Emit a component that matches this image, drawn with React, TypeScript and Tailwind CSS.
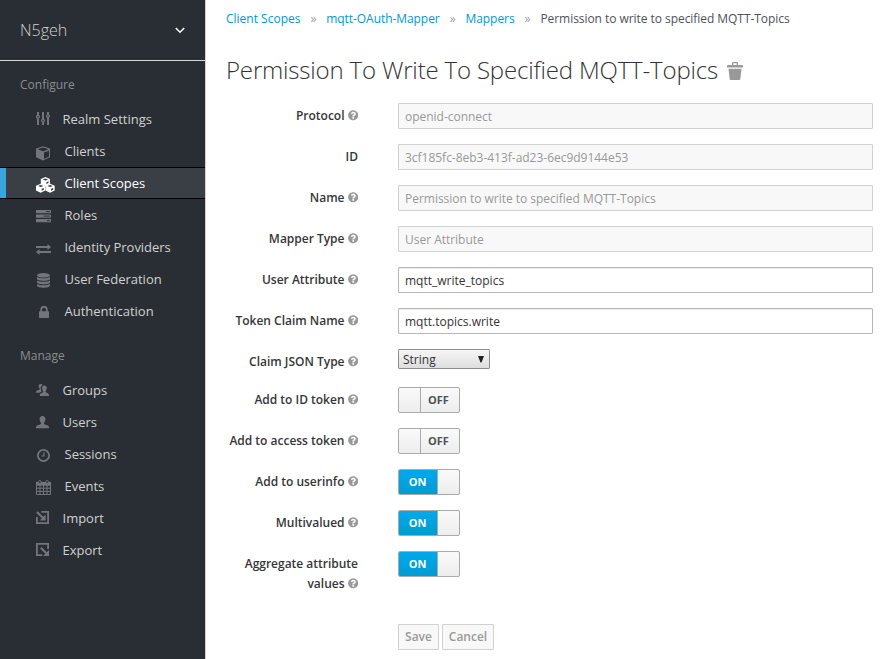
import React from "react";
import { FaQuestionCircle } from "react-icons/fa";

type IconProps = { className?: string };

const Sliders = ({ className }: IconProps) => (
  <svg className={className} width="14" height="14" viewBox="0 0 14 14" fill="none" stroke="currentColor">
    <path d="M2 0v3M2 6.6V13M7 0v7M7 10.6V13M12 0v2.4M12 6V13" strokeWidth="2" />
    <circle cx="2" cy="4.8" r="1.4" strokeWidth="1.3" />
    <circle cx="7" cy="8.8" r="1.4" strokeWidth="1.3" />
    <circle cx="12" cy="4.2" r="1.4" strokeWidth="1.3" />
  </svg>
);

const Cube = ({ className }: IconProps) => (
  <svg className={className} width="15" height="15" viewBox="0 0 15 15">
    <path fill="currentColor" d="M7.2.2 14 2.600v8.700L7.200 14.600 0 11.300V2.600z" />
    <path d="M7.200 1.500 12.500 3.300 7.200 5.300 1.600 3.300zM8 6.600l5-1.900v5.900L8 13z" fill="#292e34" />
  </svg>
);

const Cubes = ({ className }: IconProps) => (
  <svg className={className} width="19" height="16" viewBox="0 0 19 16">
    <g fill="currentColor">
      <path d="M9.400 0 14 2v5L9.400 9.200 4.800 7V2z" />
      <path d="M4.700 6.700 9.300 8.700v4.800L4.700 15.700 0 13.500V8.700z" />
      <path d="M14.100 6.700 18.700 8.700v4.800l-4.600 2.200-4.700-2.200V8.700z" />
    </g>
    <path d="M6.700 2.500 9.400 1.500l2.700 1-2.700 1zM10.400 5.200l2.100-.9v1.800l-2.100.9zM2 9.100l2.700-1 2.700 1-2.700 1zM5.700 11.800l2.100-.9v1.800l-2.100 1zM11.400 9.100l2.700-1 2.700 1-2.700 1zM15.100 11.800l2.100-.9v1.800l-2.100 1z" fill="#393f44" />
  </svg>
);

const Server = ({ className }: IconProps) => (
  <svg className={className} width="15" height="13" viewBox="0 0 15 13">
    <path d="M0 0h15v3.300H0zM0 4.500h15v3.300H0zM0 9h15v3.300H0z" fill="currentColor" />
    <path d="M10 1.600h4M7.500 6.100H14M11 10.600h3" stroke="#292e34" strokeWidth=".9" />
  </svg>
);

const Exchange = ({ className }: IconProps) => (
  <svg className={className} width="15" height="11" viewBox="0 0 15 11" fill="currentColor">
    <path d="M0 2h11.500V0L15 3 11.500 6V4H0zM15 7H3.500V5L0 8l3.500 3V9H15z" />
  </svg>
);

const Database = ({ className }: IconProps) => (
  <svg className={className} width="13" height="15" viewBox="0 0 13 15" fill="currentColor">
    <ellipse cx="6.500" cy="2.300" rx="6.500" ry="2.300" />
    <path d="M0 4c2.500 1.700 10.500 1.700 13 0v1.800c0 2.800-13 2.800-13 0zM0 7.500c2.500 1.700 10.500 1.700 13 0v1.800c0 2.800-13 2.800-13 0zM0 11c2.500 1.700 10.500 1.700 13 0v1.600c0 3-13 3-13 0z" />
  </svg>
);

const Lock = ({ className }: IconProps) => (
  <svg className={className} width="10" height="12" viewBox="0 0 10 12">
    <path d="M2.200 6V3.600a2.800 2.800 0 0 1 5.600 0V6" fill="none" stroke="currentColor" strokeWidth="1.700" />
    <rect y="5.300" width="10" height="6.700" rx=".7" fill="currentColor" />
  </svg>
);

const Person = ({ className }: IconProps) => (
  <svg className={className} width="13" height="13" viewBox="0 0 13 13" fill="currentColor">
    <path d="M6.500 0c2 0 3 1.300 2.900 3.200-.1 1.800-.7 2.900-1.400 3.600v1.300l3.600 1.500c1 .4 1.400 1 1.400 2.600H0c0-1.600.4-2.200 1.400-2.600L5 8.100V6.800C4.300 6.100 3.700 5 3.600 3.200 3.500 1.300 4.500 0 6.500 0z" />
  </svg>
);

const People = ({ className }: IconProps) => (
  <svg className={className} width="14" height="13" viewBox="0 0 14 13" fill="currentColor">
    <path d="M4.700 0c1 0 1.700.4 2 1.100-1.700.7-2.200 2-1.900 3.800.2 1.100.6 1.800 1.200 2.400L3.300 8.800H0c0-1.600.4-2 1.200-2.300L3.700 5.500v-.9C3 4 2.600 3.200 2.600 2.200 2.600.8 3.300 0 4.700 0z" />
    <path d="M8.400 1.500c1.600 0 2.400 1 2.300 2.700-.1 1.400-.5 2.200-1.100 2.800v1.200l2.300 1.100c.8.400 1.100 1.200 1.100 2.700H3.800c0-1.500.3-2.300 1.100-2.700l2.300-1.100V7c-.6-.6-1-1.400-1.100-2.800C6 2.500 6.800 1.500 8.400 1.500z" />
  </svg>
);

const Clock = ({ className }: IconProps) => (
  <svg className={className} width="13" height="13" viewBox="0 0 13 13" fill="none" stroke="currentColor">
    <circle cx="6.500" cy="6.500" r="5.600" strokeWidth="1.800" />
    <path d="M7 3.300V7H4.200" strokeWidth="1.200" />
  </svg>
);

const Calendar = ({ className }: IconProps) => (
  <svg className={className} width="15" height="15" viewBox="0 0 15 15" fill="none" stroke="currentColor">
    <path d="M.5 5h14v9.500H.5zM4 5v9.500M7.500 5v9.500M11 5v9.500M.5 8.200h14M.5 11.400h14" />
    <path d="M0 1.900h15v3.400H0z" fill="currentColor" stroke="none" />
    <rect x="2.700" y=".5" width="2.300" height="3" rx="1" fill="#292e34" />
    <rect x="10" y=".5" width="2.300" height="3" rx="1" fill="#292e34" />
  </svg>
);

const Import = ({ className }: IconProps) => (
  <svg className={className} width="13" height="13" viewBox="0 0 13 13" fill="none" stroke="currentColor">
    <path d="M5.400.9h6.700v11.200H.9V6" strokeWidth="1.800" />
    <path d="m1 1 6.300 6.300" strokeWidth="2.100" />
    <path d="M9.600 3.600v6H3.600z" fill="currentColor" stroke="none" />
  </svg>
);

const Export = ({ className }: IconProps) => (
  <svg className={className} width="13" height="13" viewBox="0 0 13 13" fill="none" stroke="currentColor">
    <path d="M12.100 6V.9H.9v11.200h5.300" strokeWidth="1.800" />
    <path d="m4.800 4.800 5.500 5.500" strokeWidth="2.100" />
    <path d="M13 7v6H7z" fill="currentColor" stroke="none" />
  </svg>
);

const Trash = () => (
  <svg className="mt-[2px]" width="16" height="18" viewBox="0 0 16 18" fill="#999">
    <path d="M5 3V1q0-1 1-1h4q1 0 1 1v2h4q1 0 1 1v1.500H0V4q0-1 1-1zM6.300 3h3.400V1.300H6.300zM1.500 6.700h13l-1.200 10.500q-.1.800-.9.800H3.600q-.8 0-.9-.8z" />
  </svg>
);

type NavItem = {
  label: string;
  Icon: React.FC<IconProps>;
  icon: string;
  text: string;
  active?: boolean;
};

const configure: NavItem[] = [
  { label: "Realm Settings", Icon: Sliders, icon: "mt-[9px]", text: "pl-[26.500px]" },
  { label: "Clients", Icon: Cube, icon: "mt-[11px]", text: "pl-[28.500px]" },
  { label: "Client Scopes", Icon: Cubes, icon: "mt-[9.500px]", text: "pl-[28.500px]", active: true },
  { label: "Roles", Icon: Server, icon: "mt-[11px]", text: "pl-[28.500px]" },
  { label: "Identity Providers", Icon: Exchange, icon: "mt-[13px]", text: "pl-[28.500px] tracking-[-0.03px]" },
  { label: "User Federation", Icon: Database, icon: "mt-[10px] ml-[1px]", text: "pl-[28.500px]" },
  { label: "Authentication", Icon: Lock, icon: "mt-[11px] ml-[2.500px]", text: "pl-[28.500px]" },
];

const manage: NavItem[] = [
  { label: "Groups", Icon: People, icon: "mt-[10px]", text: "pl-[26.500px]" },
  { label: "Users", Icon: Person, icon: "mt-[10px]", text: "pl-[26.500px]" },
  { label: "Sessions", Icon: Clock, icon: "mt-[11px] ml-[1px]", text: "pl-[28.500px]" },
  { label: "Events", Icon: Calendar, icon: "mt-[10px]", text: "pl-[28.500px]" },
  { label: "Import", Icon: Import, icon: "mt-[9px]", text: "pl-[26.500px]" },
  { label: "Export", Icon: Export, icon: "mt-[9px]", text: "pl-[26.500px]" },
];

function NavList({ items }: { items: NavItem[] }) {
  return (
    <ul>
      {items.map(({ label, Icon, icon, text, active }) => (
        <li
          key={label}
          className={
            active
              ? "flex h-8 bg-[#393f44] text-white shadow-[inset_0_1px_#030303,inset_0_-1px_#030303]"
              : "flex h-8 text-[#d1d1d1]"
          }
        >
          <span className={active ? "my-px w-1.5 bg-[#39a5dc]" : "w-1.5"} />
          <span className={active ? "ml-[30px] w-0 text-white" : "ml-[30px] w-0 text-[#72767b]"}>
            <Icon className={`max-w-none ${icon}`} />
          </span>
          <span className={`${text} text-[13px] leading-8 whitespace-nowrap`}>{label}</span>
        </li>
      ))}
    </ul>
  );
}

function Row({ label, help = true, className = "h-[41px]", children }: {
  label: string;
  help?: boolean;
  className?: string;
  children: React.ReactNode;
}) {
  return (
    <div className={`flex items-start ${className}`}>
      <label className="w-[132px] shrink-0 pt-[3px] text-right text-[12px] leading-5 font-semibold tracking-[-0.01px] text-[#363636]">
        {label}
        {help && <FaQuestionCircle className="ml-[3px] inline-block size-[10.500px] align-[-0.5px] text-[#999]" />}
      </label>
      <div className="ml-10 grow">{children}</div>
    </div>
  );
}

function Field({ value, disabled }: { value: string; disabled?: boolean }) {
  return (
    <input
      readOnly
      disabled={disabled}
      value={value}
      className={
        disabled
          ? "block h-[26px] w-[475px] rounded-[1px] border border-[#d1d1d1] bg-[#f8f8f8] px-1.5 pt-px text-[12px] tracking-[-0.02px] text-[#999]"
          : "block h-[26px] w-[475px] rounded-[1px] border border-[#b7b7b7] bg-white px-1.5 pt-px text-[12px] text-[#333] shadow-[inset_0_1px_1px_rgba(3,3,3,0.075)]"
      }
    />
  );
}

function Toggle({ on }: { on?: boolean }) {
  return (
    <button type="button" className="flex h-[26px] w-[62px] overflow-hidden rounded-[2px] border border-[#aaa] bg-linear-to-b from-[#fafafa] to-[#ededed] text-[11px] leading-6 font-bold">
      {on ? (
        <>
          <span className="w-[38px] bg-linear-to-b from-[#00a9ec] to-[#009bd3] pr-px text-center text-white">ON</span>
          <span className="grow border-l border-[#aaa]" />
        </>
      ) : (
        <>
          <span className="w-[22px] border-r border-[#aaa]" />
          <span className="grow pr-[3px] text-center text-[#4d5258]">OFF</span>
        </>
      )}
    </button>
  );
}

export default function App() {
  return (
    <div className="flex h-[659px] w-[889px] overflow-hidden bg-white font-['Open_Sans',sans-serif]">
      <aside className="w-[206px] shrink-0 border-r border-[#d1d1d1] bg-[#292e34]">
        <div className="flex h-[61px] items-center justify-between border-b border-[#d8d8d8] pr-[20px] pl-5 text-[#d1d1d1]">
          <span className="text-[16px] font-light">N5geh</span>
          <svg width="10" height="7" viewBox="0 0 10 7" fill="none" stroke="#fff" strokeWidth="1.500">
            <path d="m.8 1 4.200 4.200L9.200 1" />
          </svg>
        </div>
        <h2 className="h-[42px] pt-[14px] pl-5 text-[12px] leading-5 text-[#8b8d8f]">Configure</h2>
        <NavList items={configure} />
        <h2 className="h-[47px] pt-[19px] pl-5 text-[12px] leading-5 text-[#8b8d8f]">Manage</h2>
        <NavList items={manage} />
      </aside>
      <main className="grow pl-5">
        <nav className="flex h-[38px] items-center text-[12px] tracking-[-0.06px] text-[#0099d3]">
          <a className="tracking-normal">Client Scopes</a>
          <span className="w-[25.800px] text-center text-[#9c9c9c]">»</span>
          <a>mqtt-OAuth-Mapper</a>
          <span className="w-[25.800px] text-center text-[#9c9c9c]">»</span>
          <a>Mappers</a>
          <span className="w-[25.800px] text-center text-[#9c9c9c]">»</span>
          <span className="tracking-[-0.050px] text-[#4d5258]">Permission to write to specified MQTT-Topics</span>
        </nav>
        <h1 className="flex h-[65px] items-center gap-[9px] pb-px text-[24px] font-light tracking-[-0.17px] whitespace-nowrap text-[#333]">
          <span className="-mt-px">Permission To Write To Specified MQTT-Topics</span>
          <Trash />
        </h1>
        <form>
          <Row label="Protocol"><Field value="openid-connect" disabled /></Row>
          <Row label="ID" help={false}><Field value="3cf185fc-8eb3-413f-ad23-6ec9d9144e53" disabled /></Row>
          <Row label="Name"><Field value="Permission to write to specified MQTT-Topics" disabled /></Row>
          <Row label="Mapper Type"><Field value="User Attribute" disabled /></Row>
          <Row label="User Attribute"><Field value="mqtt_write_topics" /></Row>
          <Row label="Token Claim Name"><Field value="mqtt.topics.write" /></Row>
          <Row label="Claim JSON Type" className="h-[38px]">
            <div className="flex h-[20px] w-[92px] items-center justify-between rounded-[1px] border border-[#8f8f8f] bg-linear-to-b from-[#f6f6f6] to-[#dedede] pr-[5px] pl-1 text-[12px] text-[#333]">
              <span className="pt-[2px]">String</span>
              <svg width="6" height="7" viewBox="0 0 6 7" fill="#222"><path d="M0 0h6L3.500 6.500h-1z" /></svg>
            </div>
          </Row>
          <Row label="Add to ID token"><Toggle /></Row>
          <Row label="Add to access token"><Toggle /></Row>
          <Row label="Add to userinfo"><Toggle on /></Row>
          <Row label="Multivalued"><Toggle on /></Row>
          <Row label="Aggregate attribute values" className="h-[73px]"><Toggle on /></Row>
          <div className="flex gap-[3px] pl-[172px] text-[12px] font-semibold text-[#999]">
            <button type="button" className="h-[26px] w-[41px] rounded-[1px] border border-[#d1d1d1] bg-[#f8f8f8]">Save</button>
            <button type="button" className="h-[26px] w-[52px] rounded-[1px] border border-[#d1d1d1] bg-[#f8f8f8]">Cancel</button>
          </div>
        </form>
      </main>
    </div>
  );
}
